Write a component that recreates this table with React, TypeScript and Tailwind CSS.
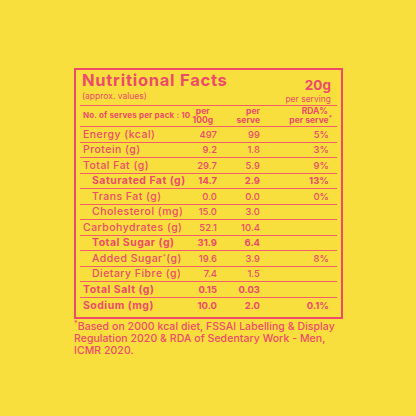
const rows: {
  label: string;
  sub?: boolean;
  bold?: boolean;
  a: string;
  b: string;
  c?: string;
}[] = [
  { label: "Energy (kcal)", a: "497", b: "99", c: "5%" },
  { label: "Protein (g)", a: "9.2", b: "1.8", c: "3%" },
  { label: "Total Fat (g)", a: "29.7", b: "5.9", c: "9%" },
  { label: "Saturated Fat (g)", sub: true, bold: true, a: "14.7", b: "2.9", c: "13%" },
  { label: "Trans Fat (g)", sub: true, a: "0.0", b: "0.0", c: "0%" },
  { label: "Cholesterol (mg)", sub: true, a: "15.0", b: "3.0" },
  { label: "Carbohydrates (g)", a: "52.1", b: "10.4" },
  { label: "Total Sugar (g)", sub: true, bold: true, a: "31.9", b: "6.4" },
  { label: "Added Sugar", sub: true, a: "19.6", b: "3.9", c: "8%" },
  { label: "Dietary Fibre (g)", sub: true, a: "7.4", b: "1.5" },
  { label: "Total Salt (g)", bold: true, a: "0.15", b: "0.03" },
  { label: "Sodium (mg)", bold: true, a: "10.0", b: "2.0", c: "0.1%" },
];

export default function App() {
  return (
    <div
      className="w-[416px] h-[416px] bg-[#F8DF3E] text-[#EE4B6B] pt-[68px] pl-[74px]"
      style={{ fontFamily: "Inter, 'Liberation Sans', sans-serif" }}
    >
      <div className="w-[269px] border-2 border-[#EE4B6B] px-1">
        {/* Title block */}
        <div className="flex justify-between border-b border-[#EF5F6A] pl-[2px] pr-[6px] h-[36px]">
          <div className="pt-[1px]">
            <div className="text-[16.5px] leading-[18px] font-bold tracking-[0.045em]">
              Nutritional Facts
            </div>
            <div className="text-[8.5px] leading-[10px] mt-[2px]">(approx. values)</div>
          </div>
          <div className="flex flex-col items-end pt-[8px]">
            <div className="text-[13.5px] leading-[14px] font-bold">20g</div>
            <div className="text-[8.5px] leading-[10px] mt-[2px]">per serving</div>
          </div>
        </div>

        {/* Column headers */}
        <div className="flex items-center border-b border-[#EF5F6A] h-[21px] text-[8.5px] leading-[9.5px] font-bold">
          <div className="w-[112px] shrink-0 whitespace-nowrap pl-[3px] text-[8px] tracking-[0.02em]">
            No. of serves per pack : 10
          </div>
          <div className="flex-1 flex justify-end pr-[4px]">
            <div className="text-center">
              per
              <br />
              100g
            </div>
          </div>
          <div className="w-[43px] text-right">
            per
            <br />
            serve
          </div>
          <div className="w-[77px] text-right pr-[5px]">
            <div className="pr-[4px]">RDA%</div>
            <div>
              per serve<sup className="text-[6px]">*</sup>
            </div>
          </div>
        </div>

        {/* Rows */}
        {rows.map((r, i) => (
          <div
            key={r.label}
            className={`flex items-center text-[9.5px] leading-[11px] ${
              r.bold ? "font-bold" : "font-medium"
            } ${
              i === rows.length - 1
                ? "h-[19px] pb-[3px]"
                : "h-[15.5px] border-b border-[#EF5F6A]"
            }`}
          >
            <div
              className={`flex-1 min-w-0 whitespace-nowrap text-[10.5px] tracking-[0.045em] ${
                r.sub ? "pl-[12px]" : "pl-[3px]"
              }`}
            >
              {r.label}
              {r.label === "Added Sugar" && (
                <>
                  <sup className="text-[6px]">*</sup>(g)
                </>
              )}
            </div>
            <div className="w-[40px] text-right">{r.a}</div>
            <div className="w-[43px] text-right">{r.b}</div>
            <div className="w-[77px] text-right pr-[8px]">{r.c ?? ""}</div>
          </div>
        ))}
      </div>

      <div className="w-[290px] mt-[2px] text-[10.5px] leading-[12px] font-medium tracking-[0.005em]">
        <sup className="text-[7px]">*</sup>Based on 2000 kcal diet, FSSAI Labelling &amp; Display
        <br />
        Regulation 2020 &amp; RDA of Sedentary Work - Men,
        <br />
        ICMR 2020.
      </div>
    </div>
  );
}
